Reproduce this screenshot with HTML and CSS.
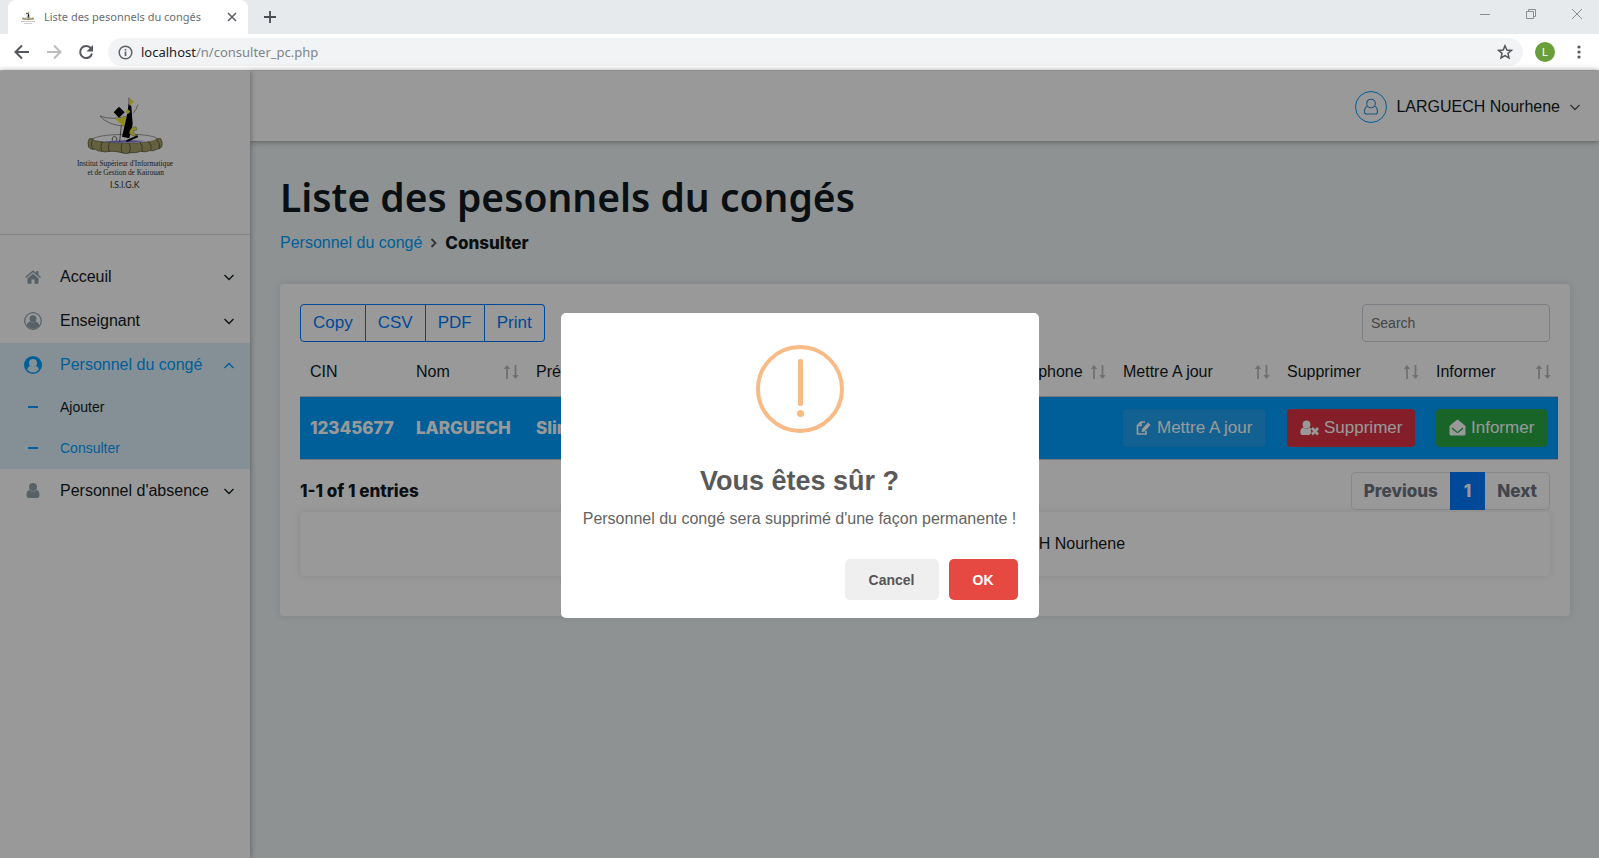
FILE: index.html
```html
<!DOCTYPE html>
<html lang="fr">
<head>
<meta charset="utf-8">
<meta name="viewport" content="width=device-width, initial-scale=1">
<title>Liste des pesonnels du congés</title>
<link rel="stylesheet" href="styles.css">
</head>
<body>
<svg class="defs" width="0" height="0" aria-hidden="true">
  <symbol id="down" viewBox="0 0 12 12"><path d="M1.500 4 6 8.500l4.500-4.500" fill="none" stroke="currentColor" stroke-width="1.300"/></symbol>
  <symbol id="up" viewBox="0 0 12 12"><path d="M1.500 9 6 4.500l4.500 4.500" fill="none" stroke="currentColor" stroke-width="1.300"/></symbol>
  <symbol id="sort" viewBox="0 0 16 16"><path d="M4 15V3M12.500 1v12" fill="none" stroke="currentColor" stroke-width="1.800"/><path d="M.8 5 4 1l3.200 4zM9.300 11l3.200 4 3.200-4z" fill="currentColor"/></symbol>
  <symbol id="fountain" viewBox="225 75 300 180">
    <path d="M268 206q-7 12-2 26 8 8 20 6 6 6 20 6 8 4 22 0 16-2 38 4 10 5 24 0 18 2 32-4 14 4 26-2 14 2 22-4 12 0 16-10 3-12-4-22z" fill="#a8a06c" stroke="#4c4a2c" stroke-width="2"/>
    <path d="M275 208q20-14 100-15t98 13q-16 14-100 13t-98-11z" fill="#fff" stroke="#444" stroke-width="1.500"/>
    <path d="M308 215q60-8 130-2-62 8-130 2z" fill="#7d76d8"/>
    <path d="M279 208q-10 14 0 30M307 214q-8 14-2 30M328 218q-6 14 0 28M365 220q-4 16 2 30M388 220q6 16 0 30M420 217q10 12 6 28M445 214q12 12 8 26M470 208q12 12 8 28" fill="none" stroke="#55522f" stroke-width="2.500"/>
    <path d="M337 212v-8q6-10 13 0v8M364 165l-5 50M387 83v28" fill="none" stroke="#222" stroke-width="2"/>
    <path d="M300 138q35 14 82 0l-8 30q-50-2-74-30z" fill="#fff" stroke="#333" stroke-width="1.500"/>
    <path d="M346 147l36-9-7 30q-14-2-12-6z" fill="#f0ea30"/>
    <path d="M357 110l17 17-17 16-16-16z"/>
    <path d="M386 102l8 6 4 55-10 42-22-5 14-60z"/>
    <path d="M388 83l14 12-14 12zM383 117l8 8-8 8-7-8z" fill="#f3e92e"/>
    <path d="M400 130q8-10 14-26" fill="none" stroke="#333" stroke-width="1.500"/>
    <path d="M404 170q-16 4-16 20 8 12 25 4-14 0-12-12 14 0 8-10z" fill="#f0e84c" stroke="#333"/>
    <path d="M378 211l34-15 3 5-34 16z"/>
  </symbol>
</svg>
<div class="browser">
  <header class="chrome">
    <div class="tabs">
      <div class="tab">
        <svg class="favicon" viewBox="0 0 16 16" aria-hidden="true"><use href="#fountain" y="1" width="16" height="11"/><path d="M1 12.500h14M4 14.500h8" stroke="#ccc"/></svg>
        <span class="tab-title">Liste des pesonnels du congés</span>
        <button class="bare" aria-label="Fermer l'onglet"><svg width="10" height="10" viewBox="0 0 10 10"><path d="M1 1l8 8M9 1 1 9" stroke="#5f6368" stroke-width="1.600"/></svg></button>
      </div>
      <button class="bare new-tab" aria-label="Nouvel onglet"><svg width="14" height="14" viewBox="0 0 14 14"><path d="M7 1v12M1 7h12" stroke="#4a4d51" stroke-width="1.800"/></svg></button>
      <div class="window-controls">
        <button class="bare" aria-label="Réduire"><svg width="12" height="12" viewBox="0 0 12 12"><path d="M1 6.500h10" stroke="#8b8d90"/></svg></button>
        <button class="bare" aria-label="Restaurer"><svg width="12" height="12" viewBox="0 0 12 12"><path d="M1.500 3.500h7v7h-7zM3.500 3.500v-2h7v7h-2" fill="none" stroke="#8b8d90"/></svg></button>
        <button class="bare" aria-label="Fermer"><svg width="12" height="12" viewBox="0 0 12 12"><path d="M1 1l10 10M11 1 1 11" stroke="#8b8d90"/></svg></button>
      </div>
    </div>
    <div class="toolbar">
      <button class="bare" aria-label="Retour"><svg width="16" height="16" viewBox="0 0 16 16"><path d="M15 8H2M8 1.500 1.500 8 8 14.500" fill="none" stroke="#54585d" stroke-width="2"/></svg></button>
      <button class="bare" aria-label="Avancer"><svg width="16" height="16" viewBox="0 0 16 16"><path d="M1 8h13M8 1.500 14.500 8 8 14.500" fill="none" stroke="#babcbe" stroke-width="2"/></svg></button>
      <button class="bare" aria-label="Actualiser"><svg width="16" height="16" viewBox="0 0 16 16"><path d="M13 4.500A6 6 0 1 0 14 9.500" fill="none" stroke="#54585d" stroke-width="2"/><path d="M15 1v6.500H8.500z" fill="#54585d"/></svg></button>
      <div class="address">
        <svg width="15" height="15" viewBox="0 0 15 15" aria-hidden="true"><circle cx="7.500" cy="7.500" r="6.300" fill="none" stroke="#5f6368" stroke-width="1.500"/><path d="M7.500 6.500V11M7.500 4v1.500" stroke="#5f6368" stroke-width="1.700"/></svg>
        <span class="url"><b>localhost</b>/n/consulter_pc.php</span>
        <button class="bare" aria-label="Favori"><svg width="16" height="16" viewBox="0 0 14 14"><path d="m7 1.500 1.600 3.700 4 .4-3 2.600.9 4L7 10.100l-3.500 2.100.9-4-3-2.600 4-.4z" fill="none" stroke="#54585d" stroke-width="1.300"/></svg></button>
      </div>
      <button class="bare avatar" aria-label="Profil">L</button>
      <button class="bare" aria-label="Menu"><svg width="16" height="16" viewBox="0 0 16 16"><g fill="#54585d"><circle cx="8" cy="3" r="1.600"/><circle cx="8" cy="8" r="1.600"/><circle cx="8" cy="13" r="1.600"/></g></svg></button>
    </div>
  </header>

  <div class="page">
    <aside class="sidebar">
      <div class="brand">
        <svg width="100" height="95" viewBox="225 75 300 285" role="img" aria-label="I.S.I.G.K">
          <use href="#fountain" x="225" y="75" width="300" height="180"/>
          <g fill="#333" text-anchor="middle">
            <text class="logo-serif" x="375" y="288">Institut Supérieur d'Informatique</text>
            <text class="logo-serif" x="377" y="314">et de Gestion de Kairouan</text>
            <text class="logo-sans" x="374" y="355">I.S.I.G.K</text>
          </g>
        </svg>
      </div>
      <nav class="menu">
        <a class="item" href="#">
          <svg class="icon" viewBox="0 0 18 18"><path d="M9 5.800 3.500 10.300V15q0 .7.700.7h3.300V11.500h3v4.200h3.300q.7 0 .7-.7v-4.700z"/><path d="m9 2.300 3.200 2.700V3h2.200v3.800l2.600 2.200-.9 1.100L9 4.200 1.900 10.100 1 9z"/></svg>
          <span>Acceuil</span><svg class="chev"><use href="#down"/></svg></a>
        <a class="item" href="#">
          <svg class="icon" viewBox="0 0 18 18"><circle cx="9" cy="9" r="8.300" fill="none" stroke="currentColor" stroke-width="1.200"/><circle cx="9" cy="6.800" r="3.500"/><path d="M2.500 13.300q1-3 3.700-3.700 2.800 2 5.600 0 2.700.7 3.700 3.700a8 8 0 0 1-13 0z"/></svg>
          <span>Enseignant</span><svg class="chev"><use href="#down"/></svg></a>
        <div class="group">
          <a class="item current" href="#">
            <svg class="icon" viewBox="0 0 18 18"><circle cx="9" cy="9" r="9"/><g class="knock"><circle cx="9" cy="7" r="4"/><path d="M3.200 13.800q.5-3.300 3-3.800 2.800 2.200 5.600 0 2.500.5 3 3.800a7.500 7.500 0 0 1-11.600 0z"/></g></svg>
            <span>Personnel du congé</span><svg class="chev"><use href="#up"/></svg></a>
          <a class="sub" href="#"><i class="dash"></i><span>Ajouter</span></a>
          <a class="sub current" href="#"><i class="dash"></i><span>Consulter</span></a>
        </div>
        <a class="item" href="#">
          <svg class="icon" viewBox="0 0 18 18"><circle cx="9" cy="5" r="4"/><path d="M5.500 8q3.500 3 7 0 3 .6 3 5 0 3-2.500 3H5q-2.500 0-2.500-3 0-4.400 3-5z"/></svg>
          <span>Personnel d'absence</span><svg class="chev"><use href="#down"/></svg></a>
      </nav>
    </aside>

    <div class="main">
      <header class="topbar">
        <button class="bare user">
          <span class="user-icon"><svg width="16" height="18" viewBox="0 0 16 18"><g fill="none" stroke="currentColor" stroke-width="1.100"><circle cx="8" cy="5.500" r="4.300"/><path d="M4.500 8.300Q1.500 9 1.500 14q0 2 2 2h9q2 0 2-2 0-5-3-5.700"/></g></svg></span>
          <span>LARGUECH Nourhene</span>
          <svg class="chev small"><use href="#down"/></svg>
        </button>
      </header>
      <main class="content">
        <h1>Liste des pesonnels du congés</h1>
        <nav class="crumbs"><a href="#">Personnel du congé</a><svg width="7" height="10" viewBox="0 0 7 10"><path d="m1.500 1 4 4-4 4" fill="none" stroke="#555" stroke-width="1.800"/></svg><strong>Consulter</strong></nav>
        <section class="card">
          <div class="tools">
            <div class="exports"><button>Copy</button><button>CSV</button><button>PDF</button><button>Print</button></div>
            <input class="search" type="search" placeholder="Search" aria-label="Search">
          </div>
          <table>
            <colgroup><col class="c-cin"><col class="c-nom"><col class="c-pre"><col><col class="c-tel"><col class="c-maj"><col class="c-sup"><col class="c-inf"></colgroup>
            <thead><tr>
              <th>CIN</th>
              <th><div>Nom<svg class="sort"><use href="#sort"/></svg></div></th>
              <th><div>Prénom<svg class="sort"><use href="#sort"/></svg></div></th>
              <th><div>Email<svg class="sort"><use href="#sort"/></svg></div></th>
              <th><div>Téléphone<svg class="sort"><use href="#sort"/></svg></div></th>
              <th><div>Mettre A jour<svg class="sort"><use href="#sort"/></svg></div></th>
              <th><div>Supprimer<svg class="sort"><use href="#sort"/></svg></div></th>
              <th><div>Informer<svg class="sort"><use href="#sort"/></svg></div></th>
            </tr></thead>
            <tbody><tr>
              <td>12345677</td><td>LARGUECH</td><td>Slim</td><td></td><td></td>
              <td><button class="btn info"><svg width="15" height="16" viewBox="0 0 15 16"><path d="M9 2H5L1.500 5.500V14H10v-3M5 2v3.500H1.500" fill="none" stroke="currentColor" stroke-width="1.700"/><path d="m6 9 6-6.500L14.500 5 8.500 11.500 5.500 12z"/></svg>Mettre A jour</button></td>
              <td><button class="btn danger"><svg width="19" height="16" viewBox="0 0 19 16"><circle cx="6.500" cy="4.500" r="3.900"/><path d="M3.500 7.500q3 2.500 6 0l2 1.500-1 1.500 1 1.500-2 3H2.500Q.3 15 .3 12.500q0-4.500 3.200-5z"/><path d="m12 8 6 6.500M18 8l-6 6.500" stroke="currentColor" stroke-width="2.600"/></svg>Supprimer</button></td>
              <td><button class="btn success"><svg width="17" height="17" viewBox="0 0 17 17"><path d="M8.500.5q.7 0 8 6.500v8q0 1.500-1.500 1.500H2Q.5 16.500.5 15V7q7.300-6.500 8-6.500z"/><path d="M3 9q4.500 4.300 5.500 4.300T14 9" fill="none" stroke="#28a745" stroke-width="1.200"/></svg>Informer</button></td>
            </tr></tbody>
          </table>
          <div class="below">
            <strong>1-1 of 1 entries</strong>
            <nav class="pages"><a href="#">Previous</a><a class="on" href="#">1</a><a href="#">Next</a></nav>
          </div>
          <footer class="credit">Copyright © Tous droits réservés LARGUECH Nourhene</footer>
        </section>
      </main>
    </div>

    <div class="overlay">
      <div class="modal" role="dialog" aria-modal="true" aria-labelledby="ask">
        <svg class="warn" width="88" height="88" viewBox="0 0 88 88" aria-hidden="true"><circle cx="44" cy="44" r="42" fill="none" stroke="#f8bb86" stroke-width="4"/><rect x="42" y="14" width="5" height="47" rx="2" fill="#f8bb86"/><circle cx="44.500" cy="68.500" r="3.600" fill="#f8bb86"/></svg>
        <h2 id="ask">Vous êtes sûr ?</h2>
        <p>Personnel du congé sera supprimé d'une façon permanente !</p>
        <div class="actions"><button class="cancel">Cancel</button><button class="ok">OK</button></div>
      </div>
    </div>
  </div>
</div>
</body>
</html>
```
FILE: styles.css
```css
* { box-sizing: border-box; }
html, body { height: 100%; margin: 0; }
body { font: 16px/24px "Liberation Sans", Arial, sans-serif; color: #111a20; }
a { color: inherit; text-decoration: none; }
button, input { font: inherit; color: inherit; }
.defs { position: absolute; }
.bare { display: flex; align-items: center; justify-content: center; padding: 0; border: 0; background: none; }
.browser { display: flex; flex-direction: column; min-height: 100%; }

/* Browser frame */
.chrome { background: #e6eaed; border-bottom: 1px solid #b6b8ba; }
.tabs { display: flex; align-items: center; height: 34px; padding-left: 8px; }
.tab { display: flex; align-items: center; width: 240px; height: 34px; padding: 0 11px 0 12px; border-radius: 8px 8px 0 0; background: #fff; }
.favicon { width: 16px; height: 16px; margin-right: 8px; }
.tab-title { flex: 1; font: 11px/16px "Segoe UI", "Noto Sans", sans-serif; color: #6a6d71; white-space: nowrap; }
.new-tab { margin-left: 15px; }
.window-controls { display: flex; gap: 34px; margin-left: auto; padding: 0 16px 6px 0; }
.toolbar { display: flex; align-items: center; gap: 16px; height: 36px; padding: 0 12px 0 14px; background: #fff; }
.address { display: flex; flex: 1; align-items: center; gap: 8px; height: 28px; padding: 0 10px; margin: 0 -4px 0 -2px; border-radius: 14px; background: #f1f3f4; }
.url { flex: 1; font: 13px/20px "Segoe UI", "Noto Sans", sans-serif; color: #80848a; }
.url b { font-weight: 400; color: #202124; }
.avatar { width: 20px; height: 20px; border-radius: 50%; background: #689f38; color: #fff; font-size: 11px; line-height: 20px; }

/* Application */
.page { position: relative; display: flex; flex: 1; background: #edf3f5; }
.sidebar { position: relative; z-index: 1; flex: none; width: 250px; background: #fff; box-shadow: 0 0 6px rgba(0, 0, 0, .4); }
.brand { display: flex; justify-content: center; padding: 24px 0 44px; border-bottom: 1px solid #d8dadd; }
.logo-serif { font: 22px "Liberation Serif", serif; }
.logo-sans { font: 26px Lato, sans-serif; }
.menu { padding-top: 20px; }
.item, .sub { display: flex; align-items: center; padding: 0 15px 0 24px; }
.item { height: 44px; }
.item span { flex: 1; white-space: nowrap; }
.sub { height: 41px; padding: 0 15px 2px 28px; font-size: 14px; }
.icon { flex: none; width: 18px; height: 18px; margin-right: 18px; fill: currentColor; color: #8fa3ad; }
.chev { flex: none; width: 12px; height: 12px; }
.chev.small { color: #555; }
.group { background: #dceffa; }
.current, .current .icon { color: #009eff; }
.knock { fill: #dceffa; }
.dash { width: 10px; height: 2px; margin-right: 22px; background: #009eff; }

.main { flex: 1; min-width: 0; }
.topbar { display: flex; justify-content: flex-end; height: 70px; padding: 2px 18px 0 0; background: #fff; box-shadow: 0 0 6px rgba(0, 0, 0, .5); }
.user { gap: 9px; }
.user-icon { display: grid; place-items: center; width: 32px; height: 32px; border: 1px solid #009eff; border-radius: 50%; color: #2e93d8; }
.content { padding: 30px 29px 30px 30px; }
h1 { margin: 0; font: 600 39px/52px "Comic Sans MS", "Noto Sans", sans-serif; }
.crumbs { display: flex; align-items: center; gap: 8px; margin: 8px 0 29px; }
.crumbs a { color: #009eff; }
strong, td, .pages { font-family: Inter, "Arial Black", sans-serif; font-size: 17px; font-weight: 800; }
.card { padding: 20px 20px 40px; border-radius: 4px; background: #fff; box-shadow: 0 0 8px rgba(0, 0, 0, .1); }
.tools { display: flex; justify-content: space-between; }
.exports { display: flex; }
.exports button { height: 38px; padding: 0 12px; border: 1px solid #007bff; border-left-width: 0; background: none; color: #007bff; font-size: 17px; }
.exports button:first-child { border-left-width: 1px; border-radius: 4px 0 0 4px; }
.exports button:last-child { border-radius: 0 4px 4px 0; }
.search { width: 188px; height: 38px; padding: 0 8px; border: 1px solid #ced4da; border-radius: 4px; background: none; font-size: 14px; }
.search::placeholder { color: #6c757d; opacity: 1; }
table { width: calc(100% + 8px); table-layout: fixed; border-collapse: collapse; }
.c-cin { width: 106px; }
.c-nom { width: 120px; }
.c-pre { width: 115px; }
.c-tel { width: 116px; }
.c-maj { width: 164px; }
.c-sup { width: 149px; }
.c-inf { width: 132px; }
th { height: 54px; padding: 6px 7px 0 10px; font-weight: 400; text-align: left; white-space: nowrap; }
th div { display: flex; align-items: center; justify-content: space-between; gap: 7px; }
.sort { flex: none; width: 16px; height: 16px; color: #bbb; }
td { height: 63px; padding: 0 10px; border: solid #c8cace; border-width: 1px 0; background: #009eff; color: #fff; white-space: nowrap; }
.btn { display: flex; align-items: center; gap: 6px; height: 38px; padding: 0 13px; border: 0; border-radius: 4px; font: 17px/24px "Liberation Sans", Arial, sans-serif; color: #fff; }
.btn svg { flex: none; fill: currentColor; }
.info { background: #1ea2f0; }
.danger { gap: 5px; background: #dc3545; }
.success { gap: 5px; background: #28a745; }
.below { display: flex; align-items: center; justify-content: space-between; padding: 12px 0 2px; }
.pages { display: flex; height: 38px; border: 1px solid #dee2e6; border-radius: 4px; color: #6c757d; line-height: 36px; }
.pages a { padding: 0 12px; }
.pages .on { margin: -1px 0; padding: 1px 14px; background: #007bff; color: #fff; }
.credit { padding: 20px; border-radius: 5px; text-align: center; box-shadow: 0 0 8px rgba(0, 0, 0, .1); }

/* Confirmation */
.overlay { position: absolute; inset: 0; z-index: 2; display: grid; place-items: center; padding-top: 2px; background: rgba(0, 0, 0, .4); }
.modal { width: 478px; padding: 32px 21px 18px; border-radius: 5px; background: #fff; text-align: center; }
.warn { display: block; margin: 0 auto; }
h2 { margin: 32px 0 0; font-size: 27px; line-height: 32px; color: #595959; }
.modal p { margin: 10px 0 28px; color: #646464; white-space: nowrap; }
.actions { display: flex; justify-content: flex-end; gap: 10px; }
.actions button { height: 41px; padding: 0 24px; border: 0; border-radius: 5px; font-size: 14px; font-weight: 700; }
.cancel { background: #efefef; color: #555; }
.ok { background: #e64942; color: #fff; }
```
